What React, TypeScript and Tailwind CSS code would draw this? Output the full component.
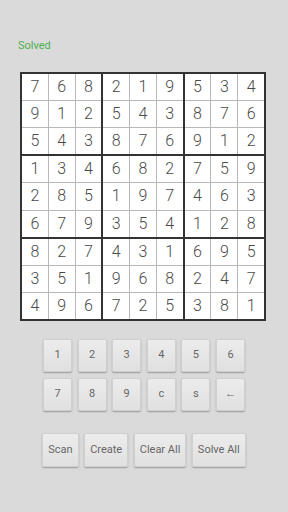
const board = [
  [7, 6, 8, 2, 1, 9, 5, 3, 4],
  [9, 1, 2, 5, 4, 3, 8, 7, 6],
  [5, 4, 3, 8, 7, 6, 9, 1, 2],
  [1, 3, 4, 6, 8, 2, 7, 5, 9],
  [2, 8, 5, 1, 9, 7, 4, 6, 3],
  [6, 7, 9, 3, 5, 4, 1, 2, 8],
  [8, 2, 7, 4, 3, 1, 6, 9, 5],
  [3, 5, 1, 9, 6, 8, 2, 4, 7],
  [4, 9, 6, 7, 2, 5, 3, 8, 1],
];

const keys = [
  ["1", "2", "3", "4", "5", "6"],
  ["7", "8", "9", "c", "s", "←"],
];

const actions = ["Scan", "Create", "Clear All", "Solve All"];

const btn =
  "flex items-center justify-center rounded-[2px] border border-[#d0d0d0] bg-gradient-to-b from-[#ececec] to-[#e0e0e0] text-[11px] text-[#666] shadow-[0_1px_1.5px_rgba(0,0,0,0.3)]";

function Box({ br, bc }: { br: number; bc: number }) {
  return (
    <div className="grid grid-cols-3 grid-rows-3 gap-px bg-[#b8b8b8]">
      {Array.from({ length: 9 }).map((_, i) => {
        const r = br * 3 + Math.floor(i / 3);
        const c = bc * 3 + (i % 3);
        return (
          <div
            key={i}
            className="flex items-center justify-center bg-white text-[16px] font-light text-[#4a4a4a]"
          >
            {board[r][c]}
          </div>
        );
      })}
    </div>
  );
}

export default function App() {
  return (
    <div
      className="h-[512px] w-[288px] bg-[#dadada] pt-[39px]"
      style={{ fontFamily: "Roboto, 'Liberation Sans', sans-serif" }}
    >
      <div className="pl-[18px] text-[11px] leading-[14px] text-[#4caf50]">Solved</div>

      <div className="ml-[20px] mt-[19px] grid h-[249px] w-[246px] grid-cols-3 grid-rows-3 gap-[2px] bg-[#333] p-[2px]">
        {Array.from({ length: 9 }).map((_, i) => (
          <Box key={i} br={Math.floor(i / 3)} bc={i % 3} />
        ))}
      </div>

      <div className="mt-[18px] flex flex-col items-center gap-[6px]">
        {keys.map((row, i) => (
          <div key={i} className="flex gap-[5.6px]">
            {row.map((k) => (
              <div key={k} className={`${btn} h-[33px] w-[29px]`}>
                {k}
              </div>
            ))}
          </div>
        ))}
      </div>

      <div className="mt-[22px] flex justify-center gap-[5.5px]">
        {actions.map((a) => (
          <div key={a} className={`${btn} h-[34px] px-[5px]`}>
            {a}
          </div>
        ))}
      </div>
    </div>
  );
}
